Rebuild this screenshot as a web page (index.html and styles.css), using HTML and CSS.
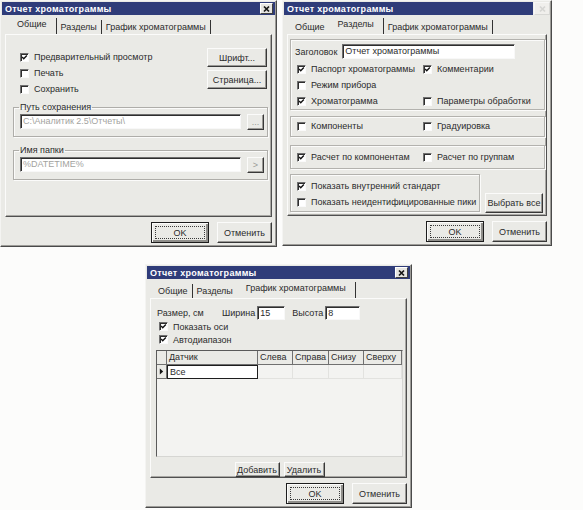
FILE: index.html
```html
<!DOCTYPE html>
<html lang="ru">
<head>
  <meta charset="UTF-8">
  <title>Отчет хроматограммы</title>
  <link rel="stylesheet" href="styles.css">
</head>
<body>

  <!-- Вкладка "Общие" -->
  <div class="dialog d1">
    <div class="titlebar">
      <span>Отчет хроматограммы</span>
      <span class="close"><svg viewBox="0 0 9 8"><path d="M2 1.5 L7 6.5 M7 1.5 L2 6.5"/></svg></span>
    </div>
    <div class="tabs">
      <span class="tab active">Общие</span>
      <span class="tab">Разделы</span>
      <span class="tab">График хроматограммы</span>
    </div>
    <div class="panel">
      <div class="general-top">
        <div class="checks">
          <div class="check"><span class="box on"><svg viewBox="0 0 9 9"><path d="M1.5 4 L3.5 6 L7.5 2"/></svg></span>Предварительный просмотр</div>
          <div class="check"><span class="box"></span>Печать</div>
          <div class="check"><span class="box"></span>Сохранить</div>
        </div>
        <div class="side-buttons">
          <span class="btn">Шрифт...</span>
          <span class="btn">Страница...</span>
        </div>
      </div>
      <fieldset class="group">
        <legend>Путь сохранения</legend>
        <div class="field-row">
          <span class="field disabled">C:\Аналитик 2.5\Отчеты\</span>
          <span class="btn mini">...</span>
        </div>
      </fieldset>
      <fieldset class="group second">
        <legend>Имя папки</legend>
        <div class="field-row">
          <span class="field disabled">%DATETIME%</span>
          <span class="btn mini">&gt;</span>
        </div>
      </fieldset>
    </div>
    <div class="footer">
      <span class="btn default"><span class="focus">OK</span></span>
      <span class="btn cancel">Отменить</span>
    </div>
  </div>

  <!-- Вкладка "Разделы" -->
  <div class="dialog d2">
    <div class="titlebar">
      <span>Отчет хроматограммы</span>
      <span class="close ghost"><svg viewBox="0 0 9 8"><path d="M2 1.5 L7 6.5 M7 1.5 L2 6.5"/></svg></span>
    </div>
    <div class="tabs">
      <span class="tab before-active">Общие</span>
      <span class="tab active">Разделы</span>
      <span class="tab">График хроматограммы</span>
    </div>
    <div class="panel sections">
      <div class="box-group g-header">
        <div class="header-row">
          <span>Заголовок</span>
          <span class="field">Отчет хроматограммы</span>
        </div>
        <div class="check-grid">
          <div class="check"><span class="box on"><svg viewBox="0 0 9 9"><path d="M1.5 4 L3.5 6 L7.5 2"/></svg></span>Паспорт хроматограммы</div>
          <div class="check"><span class="box on"><svg viewBox="0 0 9 9"><path d="M1.5 4 L3.5 6 L7.5 2"/></svg></span>Комментарии</div>
          <div class="check"><span class="box"></span>Режим прибора</div>
          <div></div>
          <div class="check"><span class="box on"><svg viewBox="0 0 9 9"><path d="M1.5 4 L3.5 6 L7.5 2"/></svg></span>Хроматограмма</div>
          <div class="check"><span class="box"></span>Параметры обработки</div>
        </div>
      </div>
      <div class="box-group g-comp">
        <div class="check-grid">
          <div class="check"><span class="box"></span>Компоненты</div>
          <div class="check"><span class="box"></span>Градуировка</div>
        </div>
      </div>
      <div class="box-group g-calc">
        <div class="check-grid">
          <div class="check"><span class="box on"><svg viewBox="0 0 9 9"><path d="M1.5 4 L3.5 6 L7.5 2"/></svg></span>Расчет по компонентам</div>
          <div class="check"><span class="box"></span>Расчет по группам</div>
        </div>
      </div>
      <div class="std-row">
        <div class="box-group g-std">
          <div class="check"><span class="box on"><svg viewBox="0 0 9 9"><path d="M1.5 4 L3.5 6 L7.5 2"/></svg></span>Показать внутренний стандарт</div>
          <div class="check"><span class="box"></span>Показать неидентифицированные пики</div>
        </div>
        <span class="btn select-all">Выбрать все</span>
      </div>
    </div>
    <div class="footer">
      <span class="btn default"><span class="focus">OK</span></span>
      <span class="btn cancel">Отменить</span>
    </div>
  </div>

  <!-- Вкладка "График хроматограммы" -->
  <div class="dialog d3">
    <div class="titlebar">
      <span>Отчет хроматограммы</span>
      <span class="close"><svg viewBox="0 0 9 8"><path d="M2 1.5 L7 6.5 M7 1.5 L2 6.5"/></svg></span>
    </div>
    <div class="tabs">
      <span class="tab">Общие</span>
      <span class="tab before-active">Разделы</span>
      <span class="tab active">График хроматограммы</span>
    </div>
    <div class="panel chart">
      <div class="size-row">
        <span class="size-label">Размер, см</span>
        <span>Ширина</span>
        <span class="field w-input">15</span>
        <span class="gap-label">Высота</span>
        <span class="field h-input">8</span>
      </div>
      <div class="check small"><span class="box on"><svg viewBox="0 0 9 9"><path d="M1.5 4 L3.5 6 L7.5 2"/></svg></span>Показать оси</div>
      <div class="check small"><span class="box on"><svg viewBox="0 0 9 9"><path d="M1.5 4 L3.5 6 L7.5 2"/></svg></span>Автодиапазон</div>
      <div class="grid">
        <div class="grid-row head">
          <span></span>
          <span>Датчик</span>
          <span>Слева</span>
          <span>Справа</span>
          <span>Снизу</span>
          <span>Сверху</span>
        </div>
        <div class="grid-row data">
          <span class="indicator"><svg viewBox="0 0 6 8"><path d="M1 0.5 L5 4 L1 7.5 Z"/></svg></span>
          <span class="current">Все</span>
          <span></span>
          <span></span>
          <span></span>
          <span></span>
        </div>
      </div>
      <div class="grid-buttons">
        <span class="btn">Добавить</span>
        <span class="btn">Удалить</span>
      </div>
    </div>
    <div class="footer">
      <span class="btn default"><span class="focus">OK</span></span>
      <span class="btn cancel">Отменить</span>
    </div>
  </div>

</body>
</html>
```

FILE: styles.css
```css
* {
  box-sizing: border-box;
}
body {
  margin: 0;
  width: 583px;
  height: 510px;
  position: relative;
  overflow: hidden;
  background: #fcfcfb;
  font-family: "Liberation Sans", Arial, sans-serif;
  font-size: 9px;
  color: #2b2b2b;
}

/* window frame */
.dialog {
  position: absolute;
  display: flex;
  flex-direction: column;
  padding: 1px;
  background: #eaeae6;
  border: 1px solid;
  border-color: #f4f4f2 #4a4a4a #4a4a4a #f4f4f2;
  box-shadow: inset -1px -1px 0 #9d9c98;
}
.d1 { left: 0; top: 0; width: 277px; height: 247px; }
.d2 { left: 282px; top: 0; width: 270px; height: 246px; }
.d3 { left: 145px; top: 264px; width: 267px; height: 244px; }

.titlebar {
  height: 13px;
  display: flex;
  align-items: center;
  justify-content: space-between;
  padding: 0 2px 0 3px;
  background: #2f3c79;
  color: #fff;
  font-weight: bold;
  letter-spacing: 0.3px;
}
.close {
  width: 13px;
  height: 11px;
  display: flex;
  align-items: center;
  justify-content: center;
  background: #e6e5e1;
  border: 1px solid;
  border-color: #fff #404040 #404040 #fff;
}
.close svg {
  width: 9px;
  height: 8px;
  stroke: #151515;
  stroke-width: 1.7;
  fill: none;
}
.d2 .titlebar {
  padding-right: 0;
  background: linear-gradient(to right, #2f3c79 0, #2f3c79 249px, #f0f0ee 249px);
}
.close.ghost {
  width: 16px;
  height: 13px;
  background: #f0efec;
  border-color: #f7f7f6 #d8d8d5 #d8d8d5 #f7f7f6;
}
.close.ghost svg {
  stroke: #d6d6d3;
}

/* tabs */
.tabs {
  height: 16px;
  margin-top: 3px;
  padding-left: 7px;
  display: flex;
  align-items: flex-end;
}
.tab {
  height: 14px;
  line-height: 14px;
  padding: 0 4px;
  border-right: 1px solid #333;
  white-space: nowrap;
}
.tab.active {
  height: 16px;
  line-height: 13px;
  padding: 0 9px 0 8px;
}
.tab.before-active {
  border-right-color: transparent;
}

.panel {
  flex: 1;
  margin: 0 3px;
  border: 1px solid;
  border-color: #fbfbfa #505050 #505050 #fbfbfa;
  box-shadow: inset -1px -1px 0 #a9a8a4;
}

/* buttons */
.btn {
  display: flex;
  align-items: center;
  justify-content: center;
  white-space: nowrap;
  border: 1px solid;
  border-color: #fbfbfa #383838 #383838 #fbfbfa;
  box-shadow: inset -1px -1px 0 #9a9995;
}
.footer {
  display: flex;
  justify-content: flex-end;
  gap: 8px;
  padding: 5px 3px 2px;
}
.footer .btn {
  height: 21px;
}
.btn.default {
  width: 58px;
  padding: 3px;
  border-color: #1c1c1c;
  box-shadow: inset 1px 1px 0 #fbfbfa, inset -2px -2px 0 #8f8e8a;
}
.focus {
  flex: 1;
  align-self: stretch;
  display: flex;
  align-items: center;
  justify-content: center;
  border: 1px dotted #3a3a3a;
}
.btn.cancel {
  width: 55px;
}

/* check boxes */
.check {
  height: 16px;
  display: flex;
  align-items: center;
  gap: 5px;
  white-space: nowrap;
}
.box {
  width: 9px;
  height: 9px;
  flex: none;
  background: #fff;
  border: 1px solid;
  border-color: #707070 #fafafa #fafafa #707070;
  box-shadow: inset 1px 1px 0 #2e2e2e;
}
.box svg {
  display: block;
  width: 7px;
  height: 7px;
  stroke: #111;
  stroke-width: 1.8;
  fill: none;
}

/* text fields */
.field {
  height: 15px;
  line-height: 13px;
  padding-left: 2px;
  background: #fff;
  white-space: nowrap;
  overflow: hidden;
  border: 1px solid;
  border-color: #6e6e6e #f8f8f8 #f8f8f8 #6e6e6e;
  box-shadow: inset 1px 1px 0 #2e2e2e;
}
.field.disabled {
  color: #a3a3a0;
}

/* Общие */
.general-top {
  display: flex;
  justify-content: space-between;
  padding: 13px 4px 0 14px;
}
.checks {
  padding-top: 1px;
}
.side-buttons {
  display: flex;
  flex-direction: column;
  gap: 3px;
}
.side-buttons .btn {
  width: 60px;
  height: 19px;
}
.group {
  min-width: 0;
  margin: 4px 3px 0 7px;
  padding: 1px 3px 6px 6px;
  border: 1px solid #aeada9;
  box-shadow: 1px 1px 0 #fbfbfa, inset 1px 1px 0 #fbfbfa;
}
.group.second {
  margin-top: 7px;
}
.group legend {
  padding: 0 1px;
  margin-left: -1px;
  line-height: 12px;
}
.field-row {
  display: flex;
  gap: 6px;
}
.field-row .field {
  flex: 1;
}
.btn.mini {
  width: 17px;
  height: 16px;
  color: #9a9a97;
}

/* Разделы */
.sections {
  padding: 4px 1px 0 2px;
}
.box-group {
  border: 1px solid #b3b2ae;
  box-shadow: 1px 1px 0 #fbfbfa, inset 1px 1px 0 #fbfbfa;
  padding-left: 6px;
}
.g-header {
  height: 71px;
  padding-top: 4px;
  padding-left: 4px;
}
.header-row {
  display: flex;
  align-items: center;
  gap: 5px;
  margin-bottom: 2px;
}
.header-row .field {
  width: 173px;
}
.g-header .check-grid {
  padding-left: 2px;
}
.check-grid {
  display: grid;
  grid-template-columns: 126px 1fr;
}
.g-comp {
  height: 21px;
  margin-top: 6px;
  padding-top: 1px;
}
.g-calc {
  height: 24px;
  margin-top: 8px;
  padding-top: 3px;
}
.std-row {
  display: flex;
  align-items: flex-start;
  gap: 5px;
  margin-top: 5px;
}
.g-std {
  width: 190px;
  height: 38px;
  padding-top: 3px;
}
.btn.select-all {
  width: 58px;
  height: 20px;
  margin-top: 19px;
}

/* График хроматограммы */
.chart {
  display: flex;
  flex-direction: column;
  padding: 7px 3px 0 5px;
}
.size-row {
  display: flex;
  align-items: center;
  gap: 2px;
  height: 14px;
  margin-left: 1px;
}
.size-row .field {
  height: 14px;
  line-height: 12px;
}
.size-label {
  width: 63px;
}
.w-input {
  width: 28px;
}
.gap-label {
  margin-left: 5px;
}
.h-input {
  width: 35px;
}
.check.small {
  height: 13px;
  margin-left: 3px;
}
.grid {
  height: 107px;
  margin-top: 4px;
  background: #f3f3f1;
  border: 1px solid;
  border-color: #5a5a5a #d6d6d3 #d6d6d3 #5a5a5a;
}
.grid-row {
  display: grid;
  grid-template-columns: 10px 91px 35px 36px 35px 1fr;
}
.grid-row span {
  padding-left: 2px;
  white-space: nowrap;
}
.head span {
  height: 14px;
  line-height: 13px;
  background: #eaeae6;
  border-right: 1px solid #707070;
  border-bottom: 1px solid #707070;
}
.data span {
  height: 14px;
  line-height: 12px;
  border-right: 1px solid #e2e2df;
  border-bottom: 1px solid #e2e2df;
}
.data .indicator {
  display: flex;
  align-items: center;
  padding-left: 2px;
  background: #eaeae6;
  border-right-color: #707070;
  border-bottom-color: #707070;
}
.indicator svg {
  width: 5px;
  height: 7px;
  fill: #111;
}
.data .current {
  background: #fff;
  border: 1px solid #1e1e1e;
}
.grid-buttons {
  display: flex;
  justify-content: center;
  gap: 4px;
  margin-top: 5px;
}
.grid-buttons .btn {
  height: 15px;
  padding: 0 3px;
}
.grid-buttons .btn:first-child {
  width: 45px;
}
.grid-buttons .btn:last-child {
  width: 41px;
}
```
